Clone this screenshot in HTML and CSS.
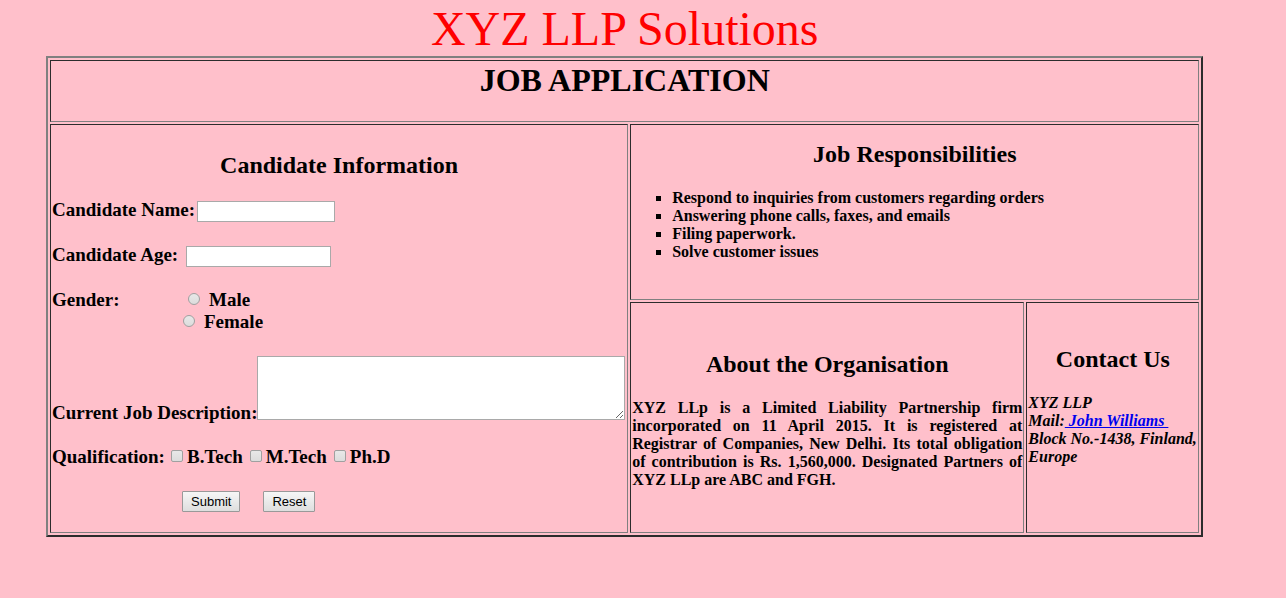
FILE: index.html
```html
<!DOCTYPE html>
<html lang="en">
<head>
<meta charset="utf-8">
<meta name="viewport" content="width=device-width, initial-scale=1">
<title>XYZ LLP Solutions - Job Application</title>
<link rel="stylesheet" href="styles.css">
</head>
<body>
<div class="page">
  <header class="brand">XYZ LLP Solutions</header>
  <main class="board">
    <div class="cell banner"><h1>JOB APPLICATION</h1></div>
    <section class="cell candidate">
      <h2>Candidate Information</h2>
      <form class="form">
        <div class="row">
          <label for="name">Candidate Name:</label>
          <input class="text name" id="name" type="text">
        </div>
        <div class="row">
          <label for="age">Candidate Age:</label>
          <input class="text age" id="age" type="text">
        </div>
        <div class="row" role="radiogroup" aria-labelledby="gender">
          <span class="gender-label" id="gender">Gender:</span>
          <div class="options">
            <label class="option male"><input class="radio" type="radio" name="gender">Male</label>
            <label class="option"><input class="radio" type="radio" name="gender">Female</label>
          </div>
        </div>
        <div class="row description">
          <label for="job">Current Job Description:</label>
          <textarea class="area" id="job"></textarea>
        </div>
        <div class="row qualification">
          <span class="qualification-label">Qualification:</span>
          <label class="choice"><input class="check" type="checkbox">B.Tech</label>
          <label class="choice"><input class="check" type="checkbox">M.Tech</label>
          <label class="choice"><input class="check" type="checkbox">Ph.D</label>
        </div>
        <div class="actions">
          <button class="button" type="submit">Submit</button>
          <button class="button" type="reset">Reset</button>
        </div>
      </form>
    </section>
    <section class="cell duties">
      <h2>Job Responsibilities</h2>
      <ul class="list">
        <li>Respond to inquiries from customers regarding orders</li>
        <li>Answering phone calls, faxes, and emails</li>
        <li>Filing paperwork.</li>
        <li>Solve customer issues</li>
      </ul>
    </section>
    <section class="cell about">
      <h2>About the Organisation</h2>
      <p class="story">XYZ LLp is a Limited Liability Partnership firm incorporated on 11 April 2015. It is registered at Registrar of Companies, New Delhi. Its total obligation of contribution is Rs. 1,560,000. Designated Partners of XYZ LLp are ABC and FGH.</p>
    </section>
    <section class="cell contact">
      <h2>Contact Us</h2>
      <address>XYZ LLP<br>Mail:<a href="mailto:john.williams@example.com">&nbsp;John Williams&nbsp;</a><br>Block No.-1438, Finland, Europe</address>
    </section>
  </main>
</div>
</body>
</html>
```
FILE: styles.css
```css
* { box-sizing: border-box; }

body {
  margin: 0;
  background: #ffc0cb;
  color: #000;
  font: bold 16px/18px "Liberation Serif", "Times New Roman", serif;
}

.page {
  width: 90%;
  margin-left: 46px;
}

.brand {
  padding-top: 2px;
  color: #f00;
  font-size: 48px;
  font-weight: normal;
  line-height: 54px;
  text-align: center;
}

.board {
  display: grid;
  grid-template-columns: 578fr 394fr 173fr;
  grid-template-rows: auto auto 1fr;
  gap: 2px;
  padding: 2px;
  border: 2px solid;
  border-color: #808080 #2c2c2c #2c2c2c #808080;
}

.cell {
  min-width: 0;
  padding: 1px;
  border: 1px solid;
  border-color: #2c2c2c #808080 #808080 #2c2c2c;
}

h1, h2 {
  margin: 0;
  text-align: center;
}

h1 {
  font-size: 32px;
  line-height: 37px;
}

h2 {
  font-size: 24px;
  line-height: 28px;
}

.banner {
  grid-column: 1 / -1;
  padding-bottom: 22px;
}

.candidate {
  grid-row: 2 / 4;
  padding: 26px 1px 20px;
}

.duties {
  grid-column: 2 / 4;
  padding: 15px 1px 38px;
}

.about { padding-top: 47px; }

.contact { padding-top: 42px; }

.form {
  display: flex;
  flex-direction: column;
  gap: 23px;
  margin-top: 20px;
  font-size: 19px;
  line-height: 22px;
}

.row {
  display: flex;
  align-items: flex-start;
}

.text, .area {
  margin: 0;
  border: 1px solid #a9a9a9;
  background: #fff;
}

.text {
  height: 21px;
  margin-top: 2px;
  margin-bottom: -1px;
}

.name {
  width: 138px;
  margin-left: 2px;
}

.age {
  width: 145px;
  margin-left: 8px;
}

.gender-label { width: 131px; }

.option {
  display: flex;
}

.male { padding-left: 5px; }

.radio, .check {
  appearance: none;
  border: 1px solid #a0a0a0;
  background: linear-gradient(#e8e8e8, #dcdcdc);
}

.radio {
  width: 12px;
  height: 12px;
  margin: 4px 9px 0 0;
  border-radius: 50%;
}

.description {
  align-items: flex-end;
}

.description label {
  flex: none;
  margin-bottom: -4px;
}

.area {
  flex: 1;
  min-width: 0;
  height: 64px;
  margin-right: 1px;
}

.qualification-label { margin-right: 6px; }

.qualification { margin-top: 3px; }

.choice {
  display: flex;
  margin-right: 7px;
}

.check {
  width: 12px;
  height: 12px;
  margin: 4px 4px 0 0;
  border-radius: 2px;
}

.actions {
  display: flex;
  gap: 23px;
  padding-left: 130px;
}

.button {
  height: 21px;
  padding: 0 8px;
  border: 1px solid #999;
  border-radius: 1px;
  background: linear-gradient(#f6f6f6, #dedede);
  color: #000;
  font: 13px/18px "Liberation Sans", Arial, sans-serif;
}

.list {
  margin: 21px 0 0;
  padding-left: 40px;
  list-style: square;
}

.story {
  margin: 21px 0 0;
  text-align: justify;
}

address { margin-top: 21px; }

a { color: #00e; }
```
